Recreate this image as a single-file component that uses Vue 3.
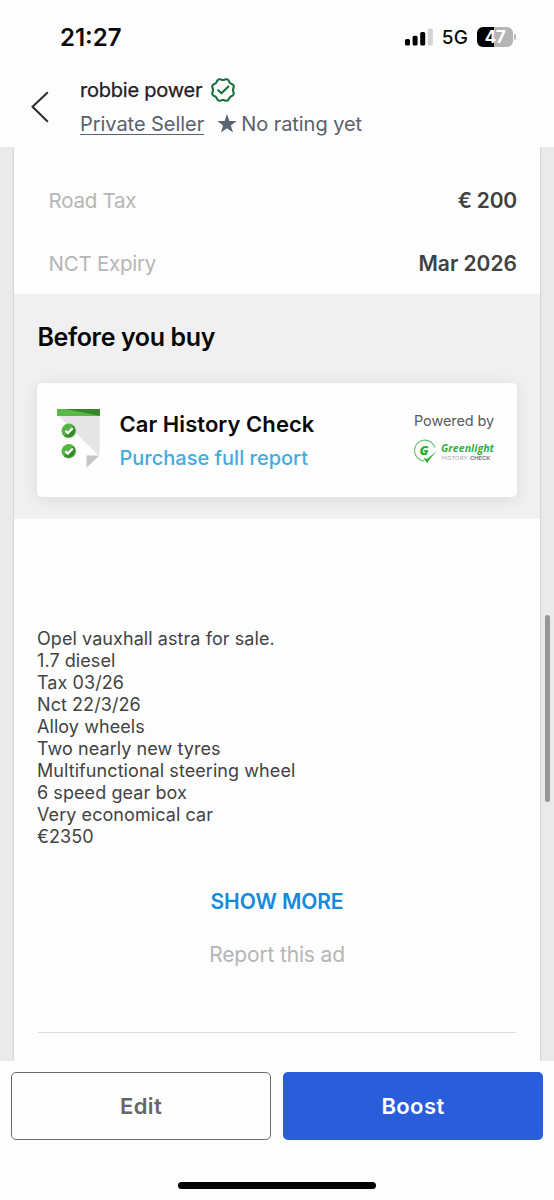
<script setup>
const specs = [
  { label: 'Road Tax', value: '€ 200', cls: 'euro' },
  { label: 'NCT Expiry', value: 'Mar 2026', cls: '' },
]
const lines = [
  'Opel vauxhall astra for sale.',
  '1.7 diesel',
  'Tax 03/26',
  'Nct 22/3/26',
  'Alloy wheels',
  'Two nearly new tyres',
  'Multifunctional steering wheel',
  '6 speed gear box',
  'Very economical car',
  '€2350',
]
// Eight-lobed outline of the verified badge
const badge = Array.from({ length: 96 }, (_, i) => {
  const a = (i / 96) * Math.PI * 2
  const r = 10.7 - 0.75 * Math.cos(8 * a)
  return `${i ? 'L' : 'M'}${(13 + r * Math.cos(a)).toFixed(2)} ${(13 + r * Math.sin(a)).toFixed(2)}`
}).join('') + 'Z'
</script>

<template>
  <div class="screen">
    <div class="status">
      <span class="time">21:27</span>
      <div class="indicators">
        <svg class="signal" width="28" height="18" viewBox="0 0 28 18">
          <rect x="0" y="11" width="5" height="6.5" rx="1.6" />
          <rect x="7.6" y="7.8" width="5" height="9.7" rx="1.6" />
          <rect x="15.2" y="4" width="5" height="13.5" rx="1.6" />
          <rect x="22.8" y="0.4" width="5" height="17.1" rx="1.6" fill="#d3d3d3" />
        </svg>
        <span class="net">5G</span>
        <div class="battery"><span class="charge">47</span></div>
        <span class="nub"></span>
      </div>
    </div>

    <header class="header">
      <svg class="back" width="18" height="32" viewBox="0 0 18 32" fill="none" stroke="#2b2b2e" stroke-width="2">
        <path d="M16.8 1.3 1.5 15.8 16.8 30.8" />
      </svg>
      <div class="seller">
        <div class="name-row">
          <span class="name">robbie power</span>
          <svg width="26" height="26" viewBox="0 0 26 26" fill="none" stroke="#17713a" stroke-width="2.1" stroke-linejoin="round" stroke-linecap="round">
            <path :d="badge" />
            <path d="M8.2 13.2 11.5 16.3 18.4 9.5" />
          </svg>
        </div>
        <div class="meta-row">
          <span class="private">Private Seller</span>
          <svg class="star" width="20" height="19" viewBox="0 0 20 19" fill="#5b6472">
            <path d="M10 0 12.4 6.9 19.6 7.1 13.9 11.5 16 18.4 10 14.3 4 18.4 6.1 11.5 0.4 7.1 7.6 6.9Z" />
          </svg>
          <span class="rating">No rating yet</span>
        </div>
      </div>
    </header>

    <main class="scroller">
      <div class="sheet">
        <div class="specs">
          <div v-for="s in specs" :key="s.label" class="spec">
            <span class="spec-label">{{ s.label }}</span>
            <span class="spec-value" :class="s.cls">{{ s.value }}</span>
          </div>
        </div>

        <section class="before">
          <h2>Before you buy</h2>
          <div class="check-card">
            <svg class="list-icon" width="43" height="59" viewBox="0 0 128 176">
              <path d="M4 21H127V139H124Z" fill="#e5e5e5" />
              <path d="M0 0H128V21H0Z" fill="#58b947" />
              <path d="M24 0H128V20Z" fill="#37852d" />
              <path d="M88 139H126L88 175Z" fill="#c5c5c5" />
              <g v-for="y in [65, 126]" :key="y" :transform="`translate(35 ${y})`">
                <circle r="21.5" fill="#55b545" />
                <path d="M14 -16A21.5 21.5 0 0 1 -14 16Z" fill="#39882f" />
                <path d="M-10 0 -3 7 12 -8" fill="none" stroke="#fff" stroke-width="6.5" />
              </g>
            </svg>
            <div class="check-text">
              <div class="check-title">Car History Check</div>
              <div class="check-link">Purchase full report</div>
            </div>
            <div class="powered">
              <span class="powered-label">Powered by</span>
              <svg class="logo" width="86" height="28" viewBox="0 0 86 28">
                <path d="M21.9 8.7A10.4 10.4 0 1 0 11.3 21.9" fill="none" stroke="#62bd66" stroke-width="1.1" />
                <path d="M10.2 18.7 14 19.9 23.3 12.6C20.7 16 18.2 18 14.2 24.2Z" fill="#2fae3c" />
                <text x="6.6" y="16" class="logo-g">G</text>
                <text x="28" y="13" textLength="53" lengthAdjust="spacingAndGlyphs" class="logo-name">Greenlight</text>
                <text x="28.5" y="21" textLength="26" lengthAdjust="spacingAndGlyphs" class="logo-sub">HISTORY</text>
                <text x="57" y="21" textLength="20.5" lengthAdjust="spacingAndGlyphs" class="logo-sub strong">CHECK</text>
              </svg>
            </div>
          </div>
        </section>

        <section class="description">
          <p v-for="l in lines" :key="l">{{ l }}</p>
        </section>
        <div class="more">SHOW MORE</div>
        <div class="report">Report this ad</div>
        <div class="rule"></div>
      </div>
      <div class="thumb"></div>
    </main>

    <footer class="footer">
      <div class="actions">
        <button class="btn edit">Edit</button>
        <button class="btn boost">Boost</button>
      </div>
      <div class="home"></div>
    </footer>
  </div>
</template>

<style>
body { margin: 0; background: #fdfdfd; }
</style>

<style scoped>
.screen {
  width: 554px;
  height: 1200px;
  display: flex;
  flex-direction: column;
  overflow: hidden;
  background: #fdfdfd;
  font-family: Inter, "Liberation Sans", sans-serif;
  white-space: nowrap;
}
.status {
  box-sizing: border-box;
  height: 74px;
  padding: 0 38px 0 60px;
  display: flex;
  justify-content: space-between;
  align-items: center;
}
.time { margin-top: 1px; font-size: 24px; font-weight: 600; line-height: 28px; color: #0b0b0b; }
.indicators { display: flex; align-items: center; }
.net { margin: 1px 0 0 9px; font-size: 19px; font-weight: 500; line-height: 22px; letter-spacing: 0.1px; color: #0b0b0b; }
.battery {
  width: 36px;
  height: 20px;
  margin-left: 9px;
  border-radius: 6px;
  background: linear-gradient(90deg, #000 17px, #b5b5b5 17px);
  color: #fff;
  font-size: 17px;
  font-weight: 700;
  line-height: 20px;
  letter-spacing: -0.4px;
  text-align: center;
}
.nub { width: 2px; height: 6px; margin-left: 1px; border-radius: 0 3px 3px 0; background: #b9b9b9; }
.header { box-sizing: border-box; height: 73px; padding-left: 31px; display: flex; }
.back { margin-top: 17px; }
.seller { margin-left: 31px; }
.name-row { height: 31px; display: flex; align-items: center; gap: 7px; }
.name { width: 123px; font-size: 20px; line-height: 24px; font-weight: 400; letter-spacing: -0.22px; color: #1d2024; -webkit-text-stroke: 0.25px #1d2024; }
.meta-row { height: 37px; display: flex; align-items: center; color: #59616e; font-size: 20px; line-height: 24px; letter-spacing: -0.05px; }
.private { height: 20px; margin-top: 2px; line-height: 20px; border-bottom: 1.4px solid #59616e; }
.star { margin: 0 4px 0 13px; }
.scroller { height: 914px; padding: 0 14px; position: relative; background: #eaeaea; }
.sheet { height: 914px; background: #fdfdfd; box-shadow: 0 0 2px rgba(0, 0, 0, 0.22); clip-path: inset(0 -4px); display: flex; flex-direction: column; }
.specs { height: 147px; padding: 2px 23px 0 34px; box-sizing: border-box; display: flex; flex-direction: column; justify-content: flex-start; }
.spec { height: 62.5px; flex: none; display: flex; align-items: center; justify-content: space-between; line-height: 26px; }
.spec:first-child { margin-top: 21px; }
.spec-label { padding-left: 0.5px; font-size: 20.5px; letter-spacing: -0.25px; color: #b6b6b6; }
.spec-value { font-size: 21px; font-weight: 600; color: #414141; }
.euro { letter-spacing: -0.2px; }
.before { box-sizing: border-box; height: 225px; padding: 28px 23px 0; background: #f0f0f0; }
h2 { margin: 0 0 0 0.5px; font-size: 25px; line-height: 30px; font-weight: 600; letter-spacing: -0.37px; color: #070707; }
.check-card {
  box-sizing: border-box;
  height: 114px;
  margin-top: 31px;
  padding: 0 22px 0 20px;
  display: flex;
  align-items: flex-start;
  border-radius: 5px;
  background: #fefefe;
  box-shadow: 0 2px 16px rgba(0, 0, 0, 0.09);
}
.list-icon { margin: 26px 0 0 -0.2px; }
.check-text { margin: 24px 0 0 19.7px; }
.check-title { font-size: 22px; line-height: 34px; font-weight: 600; letter-spacing: 0.06px; color: #0a0a0a; }
.check-link { font-size: 20px; line-height: 34px; font-weight: 500; color: #43abdd; }
.powered { margin-left: auto; width: 81px; display: flex; flex-direction: column; }
.powered-label { margin: 27px 0 7px 0; font-size: 14.5px; line-height: 22px; letter-spacing: -0.1px; color: #5a5a5a; }
.logo { margin-left: -1px; overflow: visible; }
.logo-g { font: italic 800 13px "Open Sans", sans-serif; fill: #2fae3c; }
.logo-name { font: italic 700 10.6px "Open Sans", sans-serif; fill: #35b044; }
.logo-sub { font: 400 5.2px Inter, sans-serif; fill: #a8a8a8; }
.strong { font-weight: 700; fill: #7c7c7c; }
.description { margin: 109px 0 0 23px; }
.description p { margin: 0; font-size: 18px; line-height: 22px; letter-spacing: 0.07px; color: #434343; }
.more { margin-top: 41px; text-align: center; font-size: 21px; line-height: 26px; font-weight: 600; letter-spacing: -0.1px; color: #1689db; }
.report { margin-top: 27px; text-align: center; font-size: 21px; line-height: 26px; letter-spacing: -0.16px; color: #b5b5b5; }
.rule { height: 1px; margin: 64px 24px 0 24px; background: #dcdcdc; }
.thumb { position: absolute; top: 468px; right: 4px; width: 5px; height: 187px; border-radius: 3px; background: #969696; }
.footer { flex: 1; display: flex; flex-direction: column; align-items: center; }
.actions { box-sizing: border-box; width: 554px; padding: 11px 11px 0 11px; display: flex; gap: 12px; }
.btn {
  box-sizing: border-box;
  flex: 1;
  height: 68px;
  padding: 0;
  border-radius: 5px;
  font-family: inherit;
  font-size: 22px;
  line-height: 28px;
  font-weight: 600;
  letter-spacing: 0.4px;
}
.edit { border: 1.5px solid #6b6b6b; background: #fefefe; color: #666; }
.boost { flex: none; width: 260px; border: 0; background: #295ddb; color: #fff; }
.home { width: 198px; height: 7px; margin-top: 41.5px; border-radius: 4px; background: #000; }
</style>
